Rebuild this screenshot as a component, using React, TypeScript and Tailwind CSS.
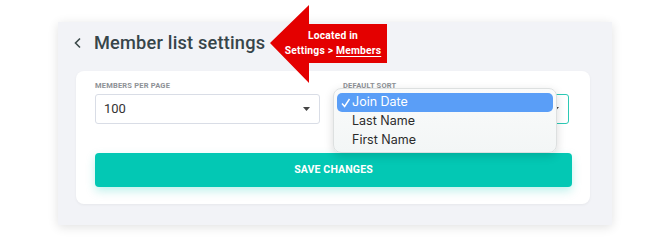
import React from "react";

function Caret() {
  return (
    <svg width="7" height="4" viewBox="0 0 7 4" className="shrink-0">
      <path d="M0 0h7L3.5 4z" fill="#444" />
    </svg>
  );
}

export default function App() {
  const options = ["Join Date", "Last Name", "First Name"];
  const selected = 0;

  return (
    <div className="relative w-[670px] h-[249px] bg-white overflow-hidden" style={{ fontFamily: "Roboto, 'Liberation Sans', sans-serif" }}>
      {/* Settings panel */}
      <div className="absolute left-[58px] top-[22px] w-[554px] h-[203px] bg-[#f2f3f7] shadow-[0_2px_10px_rgba(0,0,0,0.12)] flex flex-col">
        <div className="flex items-center h-[40px] pt-[2px] pl-[15px]">
          <svg width="10" height="12" viewBox="0 0 10 12" className="mr-[11px]">
            <path d="M7 1.5 2.5 6 7 10.5" stroke="#3c4a4a" strokeWidth="1.6" fill="none" />
          </svg>
          <h1 className="text-[18.2px] font-medium text-[#37454a] tracking-[0.2px]">Member list settings</h1>
        </div>

        <div className="ml-[18px] mt-[9px] w-[514px] h-[133px] bg-white rounded-[8px] shadow-[0_1px_3px_rgba(0,0,0,0.05)] pt-[10px] pl-[19px] pr-[18px]">
          <div className="flex gap-[23px]">
            <div className="w-[225px]">
              <div className="text-[7.5px] leading-[10px] font-bold text-[#8d9196] tracking-[0.2px] h-[13px]">MEMBERS PER PAGE</div>
              <div className="h-[30px] border border-[#d9dde6] rounded-[3px] flex items-center justify-between pl-[8px] pr-[9px]">
                <span className="text-[13px] text-[#333]">100</span>
                <Caret />
              </div>
            </div>
            <div className="w-[226px] relative">
              <div className="text-[7.5px] leading-[10px] font-bold text-[#8d9196] tracking-[0.2px] h-[13px]">DEFAULT SORT</div>
              <div className="h-[30px] border-[1.5px] border-[#2cc9b5] rounded-[3px] flex items-center justify-end pr-[9px]">
                <Caret />
              </div>
              {/* Open dropdown */}
              <div
                className="absolute left-[-10px] top-[7px] w-[224px] h-[65px] rounded-[8px] bg-gradient-to-b from-[#fafbfb] to-[#f3f6f6] border border-[#dde0e0] shadow-[0_3px_10px_rgba(0,0,0,0.15)] px-[3px] pt-[4px] flex flex-col"
                style={{ fontFamily: "Inter, 'Noto Sans', sans-serif" }}
              >
                {options.map((o, i) => (
                  <div
                    key={o}
                    className={
                      i === selected
                        ? "h-[19px] rounded-[5px] bg-[#5a9ef7] text-white flex items-center text-[12.5px] pl-[4px]"
                        : "h-[19px] text-[#2b2b2b] flex items-center text-[12.5px] pl-[15px]"
                    }
                  >
                    {i === selected && (
                      <svg width="11" height="10" viewBox="0 0 11 10" className="shrink-0">
                        <path d="M1 5.5 3.6 8.5 8.5 1" stroke="#fff" strokeWidth="1.4" fill="none" />
                      </svg>
                    )}
                    {o}
                  </div>
                ))}
              </div>
            </div>
          </div>

          <button className="mt-[29px] w-[477px] h-[34px] rounded-[4px] bg-[#03c8b4] text-white text-[10.6px] font-bold tracking-[0.1px] shadow-[0_4px_10px_rgba(3,200,180,0.25)]">
            SAVE CHANGES
          </button>
        </div>
      </div>

      {/* Red callout arrow */}
      <svg className="absolute left-0 top-0" width="670" height="249" viewBox="0 0 670 249">
        <polygon points="270,43 309,5 309,24 387,24 387,63 309,63 309,83" fill="#e40000" />
      </svg>
      <div className="absolute left-[280px] top-[28px] w-[106px] text-center text-white text-[10.3px] font-bold leading-[15px] tracking-[0.2px]">
        <div>Located in</div>
        <div>
          Settings &gt; <span className="underline underline-offset-2">Members</span>
        </div>
      </div>
    </div>
  );
}
